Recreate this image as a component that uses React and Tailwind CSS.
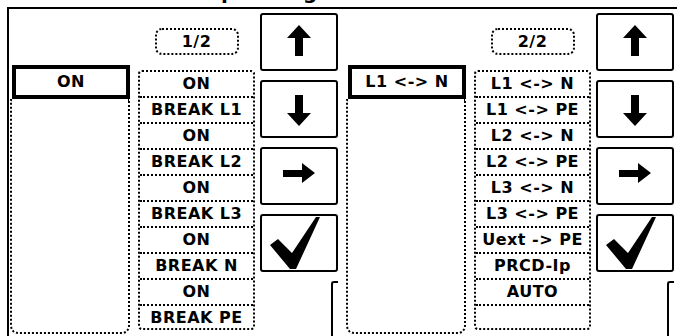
import React from 'react'

const leftItems = ['ON', 'BREAK L1', 'ON', 'BREAK L2', 'ON', 'BREAK L3', 'ON', 'BREAK N', 'ON', 'BREAK PE']
const rightItems = ['L1 <-> N', 'L1 <-> PE', 'L2 <-> N', 'L2 <-> PE', 'L3 <-> N', 'L3 <-> PE', 'Uext -> PE', 'PRCD-Ip', 'AUTO', '']

const Button = ({ children }) => (
  <div className="h-[58px] w-full border-2 border-black rounded-[3px] flex items-center justify-center">
    {children}
  </div>
)

const UpArrow = () => (
  <svg width="74" height="54" viewBox="0 0 74 54">
    <polygon points="37,10 49,23 41,23 41,41 33,41 33,23 25,23" fill="black" />
  </svg>
)

const DownArrow = () => (
  <svg width="74" height="54" viewBox="0 0 74 54">
    <polygon points="37,44 49,31 41,31 41,13 33,13 33,31 25,31" fill="black" />
  </svg>
)

const RightArrow = () => (
  <svg width="74" height="54" viewBox="0 0 74 54">
    <polygon points="21,21 40,21 40,14 53,24 40,34 40,28 21,28" fill="black" />
  </svg>
)

const Check = () => (
  <svg width="74" height="54" viewBox="0 0 74 54">
    <polygon points="8,29 16,23 30,37 54,1 58,1 34,53 28,53" fill="black" />
  </svg>
)

const Panel = ({ page, selected, items }) => (
  <div className="flex w-[336px] shrink-0">
    {/* selected value + empty dotted column */}
    <div className="ml-[1px] mt-[56px] w-[120px] flex flex-col">
      <div className="ml-[2px] w-[118px] h-[34px] border-4 border-black flex items-center justify-center tracking-[0.5px]">
        {selected}
      </div>
      <div className="w-[120px] h-[235px] border-2 border-t-0 border-dotted border-black rounded-b-[8px]" />
    </div>

    {/* option list */}
    <div className="ml-[8px] w-[117px] mt-[19px] flex flex-col items-center">
      <div className="w-[84px] h-[27px] border-2 border-dotted border-black rounded-[7px] flex items-center justify-center tracking-[0.5px]">
        {page}
      </div>
      <div className="mt-[15px] w-full h-[260px] border-2 border-dotted border-black rounded-[4px] flex flex-col">
        {items.map((item, i) => (
          <div
            key={i}
            className={
              i === 0
                ? 'flex-1 flex items-center justify-center tracking-[0.5px]'
                : 'flex-1 flex items-center justify-center tracking-[0.5px] border-t-2 border-dotted border-black'
            }
          >
            {item}
          </div>
        ))}
      </div>
    </div>

    {/* buttons */}
    <div className="ml-[5px] w-[78px] mt-[4px] flex flex-col gap-[9px]">
      <Button><UpArrow /></Button>
      <Button><DownArrow /></Button>
      <Button><RightArrow /></Button>
      <Button><Check /></Button>
      <div className="ml-[71px] h-[60px] border-l-2 border-t-2 border-black rounded-tl-[3px]" />
    </div>
  </div>
)

const App = () => {
  return (
    <div className="w-[677px] h-[336px] overflow-hidden bg-white text-black font-bold text-[16px] font-['DejaVu_Sans',sans-serif]">
      <div className="h-[7px] overflow-hidden pl-[204px]">
        <div className="mt-[-18px] text-[20px] leading-[20px] whitespace-nowrap">Operating</div>
      </div>
      <div className="ml-[7px] h-[329px] border-l-2 border-t-2 border-black flex overflow-hidden">
        <Panel page="1/2" selected="ON" items={leftItems} />
        <Panel page="2/2" selected="L1 <-> N" items={rightItems} />
      </div>
    </div>
  )
}

export default App
